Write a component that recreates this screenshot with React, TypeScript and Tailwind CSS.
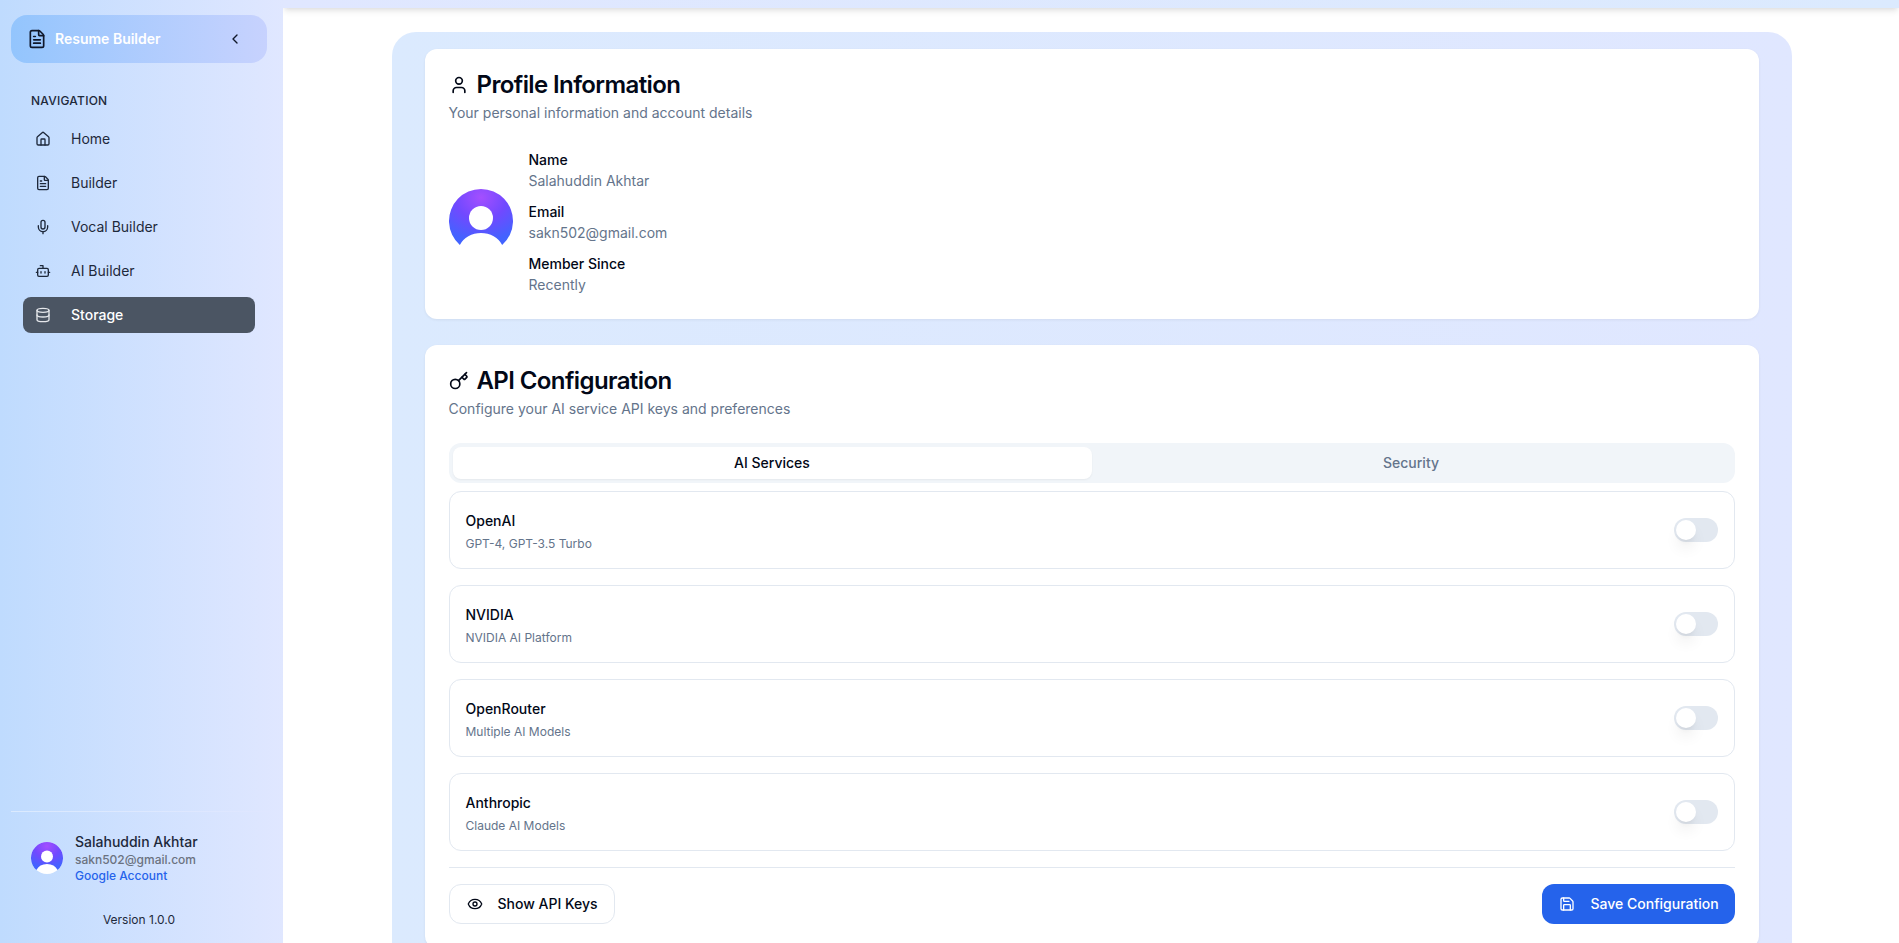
import React from 'react';
import { Bot, ChevronLeft, Database, Eye, FileText, Home, Key, Mic, Save, User } from 'lucide-react';

const navItems = [
  { label: 'Home', icon: Home },
  { label: 'Builder', icon: FileText },
  { label: 'Vocal Builder', icon: Mic },
  { label: 'AI Builder', icon: Bot },
  { label: 'Storage', icon: Database, active: true },
];

const services = [
  { name: 'OpenAI', desc: 'GPT-4, GPT-3.5 Turbo' },
  { name: 'NVIDIA', desc: 'NVIDIA AI Platform' },
  { name: 'OpenRouter', desc: 'Multiple AI Models' },
  { name: 'Anthropic', desc: 'Claude AI Models' },
];

const profile = [
  { label: 'Name', value: 'Salahuddin Akhtar' },
  { label: 'Email', value: 'sakn502@gmail.com' },
  { label: 'Member Since', value: 'Recently' },
];

function Avatar({ id, className }: { id: string; className: string }) {
  return (
    <svg viewBox="0 0 64 64" className={className}>
      <defs>
        <radialGradient id={id} cx="0.5" cy="0.15" r="0.8">
          <stop offset="0" stopColor="#a44fff" />
          <stop offset="0.5" stopColor="#7149ff" />
          <stop offset="1" stopColor="#4263ff" />
        </radialGradient>
      </defs>
      <circle cx="32" cy="32" r="32" fill="#fff" />
      <path d="M10.83 56 A32 32 0 1 1 53.17 56 A23.1 20 0 0 0 10.83 56 Z" fill={`url(#${id})`} />
      <circle cx="32" cy="29" r="12" fill="#fff" />
    </svg>
  );
}

function Sidebar() {
  return (
    <aside className="w-[283px] shrink-0 h-full flex flex-col bg-gradient-to-r from-[#bfdbfe] to-[#e0e7ff]">
      <div className="pl-[11px] pr-4 pt-[15px]">
        <div className="h-12 rounded-2xl bg-gradient-to-r from-[#93c5fd] to-[#c7d2fe] flex items-center pl-4 pr-6">
          <FileText className="w-5 h-5 text-[#0f172a]" strokeWidth={2} />
          <span className="ml-2 text-sm font-semibold text-white">Resume Builder</span>
          <ChevronLeft className="ml-auto w-4 h-4 text-[#0f172a]" />
        </div>
      </div>
      <div className="mt-[30px] pl-[31px] text-xs font-medium tracking-[0.02em] leading-4 text-[#1e293b]">NAVIGATION</div>
      <nav className="mt-3 pl-[23px] pr-[28px] flex flex-col gap-2">
        {navItems.map((item) => (
          <div
            key={item.label}
            className={
              item.active
                ? 'h-9 rounded-lg bg-[#4b5563] text-white flex items-center pl-3 text-sm font-medium'
                : 'h-9 rounded-lg text-[#1e293b] flex items-center pl-3 text-sm'
            }
          >
            <item.icon className={item.active ? 'w-4 h-4 text-[#e5e7eb]' : 'w-4 h-4 text-[#1e293b]'} />
            <span className="ml-5">{item.label}</span>
          </div>
        ))}
      </nav>
      <div className="mt-auto mx-[11px] h-px bg-gradient-to-r from-[#dbeafe] to-[#dfe6ff]" />
      <div className="pl-[31px] pt-5 flex items-center gap-3">
        <Avatar id="avatar-small" className="w-8 h-8" />
        <div>
          <div className="text-sm leading-5 font-medium text-[#1e293b]">Salahuddin Akhtar</div>
          <div className="text-xs leading-4 font-medium text-[#6b7280]">sakn502@gmail.com</div>
          <div className="text-xs leading-4 font-medium text-[#2563eb]">Google Account</div>
        </div>
      </div>
      <div className="mt-7 mb-[15px] pr-[5px] text-center text-xs leading-4 text-[#1e293b]">Version 1.0.0</div>
    </aside>
  );
}

function Switch() {
  return (
    <div className="w-11 h-6 rounded-full bg-[#e2e8f0] p-0.5 shrink-0">
      <div className="w-5 h-5 rounded-full bg-white shadow-lg" />
    </div>
  );
}

function CardTitle({ icon: Icon, title, sub }: { icon: React.ElementType; title: string; sub: string }) {
  return (
    <div>
      <div className="flex items-center gap-2 text-2xl leading-6 font-semibold tracking-tight text-[#020817]">
        <Icon className="w-5 h-5" />
        <span>{title}</span>
      </div>
      <p className="mt-1.5 text-sm leading-5 text-[#64748b]">{sub}</p>
    </div>
  );
}

export default function App() {
  return (
    <div className="h-screen w-full flex overflow-hidden bg-white font-['Inter',sans-serif]">
      <Sidebar />
      <main className="flex-1 min-w-0 h-full flex flex-col overflow-hidden">
        <div className="h-2 shrink-0 bg-gradient-to-r from-[#e0e7ff] to-[#dbeafe] shadow-md" />
        <div className="flex-1 overflow-hidden pt-6 pl-px">
          <div className="w-[1400px] mx-auto rounded-3xl bg-gradient-to-r from-[#dbeafe] to-[#e0e7ff] px-[33px] pt-[17px] pb-8 flex flex-col gap-[26px]">
            <section className="bg-white rounded-xl shadow-[0_1px_3px_rgba(0,0,0,0.06)] p-6">
              <CardTitle icon={User} title="Profile Information" sub="Your personal information and account details" />
              <div className="mt-[26px] flex items-center gap-4">
                <Avatar id="avatar-large" className="w-16 h-16 mb-[3px]" />
                <div className="flex flex-col gap-[10px]">
                  {profile.map((row) => (
                    <div key={row.label} className="text-sm leading-[21px]">
                      <div className="font-medium text-[#020817]">{row.label}</div>
                      <div className="text-[#64748b]">{row.value}</div>
                    </div>
                  ))}
                </div>
              </div>
            </section>

            <section className="bg-white rounded-xl shadow-[0_1px_3px_rgba(0,0,0,0.06)] p-6">
              <CardTitle icon={Key} title="API Configuration" sub="Configure your AI service API keys and preferences" />
              <div className="mt-6 h-10 rounded-xl bg-[#f1f5f9] p-1 grid grid-cols-2 text-sm font-medium">
                <div className="rounded-lg bg-white shadow-xs flex items-center justify-center text-[#020817]">AI Services</div>
                <div className="flex items-center justify-center text-[#64748b]">Security</div>
              </div>
              <div className="mt-2 flex flex-col gap-4">
                {services.map((s) => (
                  <div key={s.name} className="h-[78px] rounded-xl border border-[#e2e8f0] px-4 flex items-center justify-between">
                    <div>
                      <div className="text-sm leading-[26px] font-medium text-[#020817]">{s.name}</div>
                      <div className="mt-0.5 text-xs leading-4 text-[#64748b]">{s.desc}</div>
                    </div>
                    <Switch />
                  </div>
                ))}
              </div>
              <div className="mt-4 pt-4 border-t border-[#e2e8f0] flex items-center justify-between text-sm font-medium">
                <button className="h-10 w-[166px] rounded-xl border border-[#e2e8f0] bg-white flex items-center pl-[17px] text-[#020817]">
                  <Eye className="w-4 h-4" />
                  <span className="ml-[15px]">Show API Keys</span>
                </button>
                <button className="h-10 w-[193px] rounded-xl bg-[#2563eb] flex items-center pl-[17px] text-white">
                  <Save className="w-4 h-4" />
                  <span className="ml-4">Save Configuration</span>
                </button>
              </div>
            </section>
          </div>
        </div>
      </main>
    </div>
  );
}
